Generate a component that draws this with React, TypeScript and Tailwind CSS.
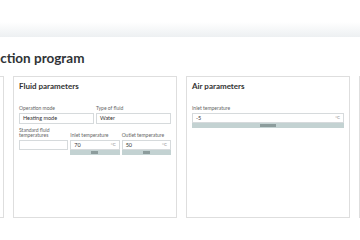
import React from 'react';

function Field({ label, value, unit, slider, thumb, tall }: { label: string; value?: string; unit?: boolean; slider?: boolean; thumb?: string; tall?: boolean }) {
  return (
    <div className="flex flex-col">
      <span className="text-[5px] leading-[5px] text-[#666] mb-[2px]">{label}</span>
      <div className={`${tall ? 'h-[11px]' : 'h-[10px]'} border border-[#d6dadc] bg-white flex items-center justify-between px-[3px] text-[5.5px] text-[#333]`}>
        <span>{value}</span>
        {unit && <span className="text-[4.5px] text-[#888]">°C</span>}
      </div>
      {slider && (
        <div className="h-[5px] bg-[#c3d2d2] flex justify-center">
          <div className={`h-[3px] mt-[1px] bg-[#8c9c9c] ${thumb ?? 'w-[7px]'}`} />
        </div>
      )}
    </div>
  );
}

function Card({ children }: { children?: React.ReactNode }) {
  return (
    <div className="w-[164px] shrink-0 h-[142px] border border-[#dedede] bg-white pt-[4px] px-[5px]">
      {children}
    </div>
  );
}

export default function App() {
  return (
    <div className="w-[360px] h-[240px] overflow-hidden bg-white" style={{ fontFamily: 'Lato, "Open Sans", sans-serif' }}>
      <div className="h-[22px] bg-white" />
      <div className="h-[15px] bg-gradient-to-b from-white to-[#edf0f2]" />
      <h1 className="-ml-[25px] mt-[13px] text-[13.5px] leading-[16px] font-bold text-[#2f3336] whitespace-nowrap">
        Selection program
      </h1>
      <div className="flex gap-[9px] -ml-[160px] mt-[10px]">
        <Card />
        <Card>
          <h2 className="text-[8px] leading-[10px] font-bold text-[#333]">Fluid parameters</h2>
          <div className="grid grid-cols-2 gap-[2px] mt-[15px]">
            <Field label="Operation mode" value="Heating mode" tall />
            <Field label="Type of fluid" value="Water" tall />
          </div>
          <div className="grid grid-cols-3 gap-[2px] mt-[4px] items-end">
            <div className="flex flex-col pb-[5px]">
              <span className="text-[5px] leading-[5px] text-[#666] mb-[2px]">Standard fluid<br />temperatures</span>
              <div className="h-[10px] border border-[#d6dadc] bg-white" />
            </div>
            <Field label="Inlet temperature" value="70" unit slider />
            <Field label="Outlet temperature" value="50" unit slider />
          </div>
        </Card>
        <Card>
          <h2 className="text-[8px] leading-[10px] font-bold text-[#333]">Air parameters</h2>
          <div className="mt-[15px]">
            <Field label="Inlet temperature" value="-5" unit slider thumb="w-[16px]" />
          </div>
        </Card>
        <Card />
      </div>
    </div>
  );
}
